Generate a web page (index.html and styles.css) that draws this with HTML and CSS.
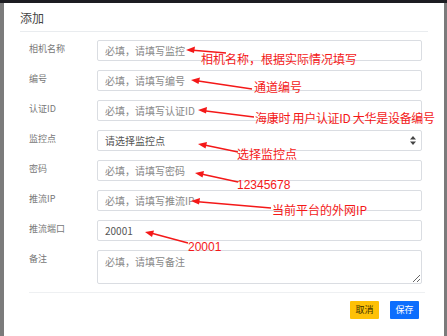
FILE: index.html
```html
<!DOCTYPE html>
<html lang="zh-CN">
<head>
    <meta charset="UTF-8">
    <title>添加</title>
    <link rel="stylesheet" href="styles.css">
</head>
<body>

<div class="topbar"></div>
<div class="stage">
    <div class="modal">
        <div class="modal-header">
            <h5 class="modal-title">添加</h5>
        </div>
        <form class="modal-body">
            <label class="form-label">相机名称</label>
            <input class="form-control" type="text" placeholder="必填，请填写监控">

            <label class="form-label">编号</label>
            <input class="form-control" type="text" placeholder="必填，请填写编号">

            <label class="form-label">认证ID</label>
            <input class="form-control" type="text" placeholder="必填，请填写认证ID">

            <label class="form-label">监控点</label>
            <div class="form-control form-select">
                <span>请选择监控点</span>
                <svg width="6" height="9" viewBox="0 0 6 9"><path d="M0 3.5 L3 0 L6 3.5 Z M0 5.5 L3 9 L6 5.5 Z" fill="#444"/></svg>
            </div>

            <label class="form-label">密码</label>
            <input class="form-control" type="text" placeholder="必填，请填写密码">

            <label class="form-label">推流IP</label>
            <input class="form-control" type="text" placeholder="必填，请填写推流IP">

            <label class="form-label">推流端口</label>
            <input class="form-control" type="text" value="20001">

            <label class="form-label">备注</label>
            <textarea class="form-control form-textarea" placeholder="必填，请填写备注"></textarea>
        </form>
        <div class="modal-footer">
            <button class="btn btn-warning" type="button">取消</button>
            <button class="btn btn-primary" type="button">保存</button>
        </div>
    </div>

    <!-- annotations drawn over the screenshot -->
    <svg class="arrows" width="447" height="336" viewBox="0 0 447 336">
        <g stroke="#f41818" stroke-width="1.4" fill="#f41818">
            <line x1="190" y1="50" x2="226" y2="53"/>
            <polygon points="186,50 195,46.5 194,53" stroke="none"/>
            <line x1="195" y1="80.5" x2="252" y2="89"/>
            <polygon points="191,80 200,77.5 198.5,84" stroke="none"/>
            <line x1="202" y1="110.5" x2="254" y2="117"/>
            <polygon points="198,110 207,107 206,113.5" stroke="none"/>
            <line x1="202" y1="144.5" x2="238" y2="152"/>
            <polygon points="198,144 207,142 205.5,148.5" stroke="none"/>
            <line x1="199" y1="173.5" x2="238" y2="182"/>
            <polygon points="195,173 204,171 202.5,177.5" stroke="none"/>
            <line x1="195" y1="201.5" x2="271" y2="208"/>
            <polygon points="191,201 200,198 199,204.5" stroke="none"/>
            <line x1="149" y1="232.5" x2="188" y2="243"/>
            <polygon points="145,232 154,230.5 152,237" stroke="none"/>
        </g>
    </svg>
    <div class="note note-1">相机名称，根据实际情况填写</div>
    <div class="note note-2">通道编号</div>
    <div class="note note-3">海康时 用户认证ID 大华是设备编号</div>
    <div class="note note-4">选择监控点</div>
    <div class="note note-5">12345678</div>
    <div class="note note-6">当前平台的外网IP</div>
    <div class="note note-7">20001</div>
</div>

</body>
</html>
```

FILE: styles.css
```css
/* Page */
body {
    margin: 0;
    font-family: "Noto Sans CJK SC", "Liberation Sans", sans-serif;
    background: #7b7b7b;
    height: 336px;
    overflow: hidden;
}

.topbar {
    height: 3px;
    background: #1d1d22;
}

.stage {
    position: relative;
    height: 333px;
    padding: 0 3px 0 4px;
}

/* Modal */
.modal {
    background: #fff;
    height: 333px;
}

.modal-header {
    margin: 0 16px;
    padding: 9px 0 7px;
    border-bottom: 1px solid #e9ecef;
}

.modal-title {
    margin: 0;
    font-size: 12px;
    line-height: 12px;
    font-weight: normal;
    color: #444;
}

.modal-body {
    display: grid;
    grid-template-columns: 68px 325px;
    row-gap: 9px;
    margin: 0;
    padding: 8px 0 0 25px;
}

.form-label {
    font-size: 9px;
    line-height: 12px;
    color: #777;
    padding-top: 3px;
}

.form-control {
    box-sizing: border-box;
    height: 21px;
    margin: 0;
    padding: 0 7px;
    border: 1px solid #dadde2;
    border-radius: 2px;
    font-family: inherit;
    font-size: 10px;
    color: #555;
    background: #fff;
    outline: none;
}

.form-control::placeholder {
    color: #888;
}

.form-select {
    display: flex;
    align-items: center;
    justify-content: space-between;
    padding-right: 5px;
    color: #555;
}

.form-textarea {
    height: 34px;
    padding-top: 3px;
    resize: vertical;
}

/* Footer */
.modal-footer {
    display: flex;
    justify-content: flex-end;
    gap: 11px;
    margin: 8px 19px 0 25px;
    padding: 8px 6px 0 0;
    border-top: 1px solid #eef0f2;
}

.btn {
    width: 29px;
    height: 18px;
    padding: 0;
    border: none;
    border-radius: 1px;
    font-family: inherit;
    font-size: 9px;
    line-height: 18px;
}

.btn-warning {
    background: #fec107;
    color: #3a3000;
}

.btn-primary {
    background: #0d6efd;
    color: #fff;
}

/* Annotations */
.arrows {
    position: absolute;
    top: -3px;
    left: 0;
}

.note {
    position: absolute;
    font-size: 12px;
    line-height: 14px;
    color: #f41818;
    white-space: nowrap;
}

.note-1 { left: 201px; top: 49px; }
.note-2 { left: 254px; top: 77px; }
.note-3 { left: 255px; top: 108px; letter-spacing: -0.3px; }
.note-4 { left: 237px; top: 144px; }
.note-5 { left: 237px; top: 175px; font-family: "Liberation Sans", sans-serif; }
.note-6 { left: 272px; top: 200px; }
.note-7 { left: 188px; top: 237px; font-family: "Liberation Sans", sans-serif; }
```
